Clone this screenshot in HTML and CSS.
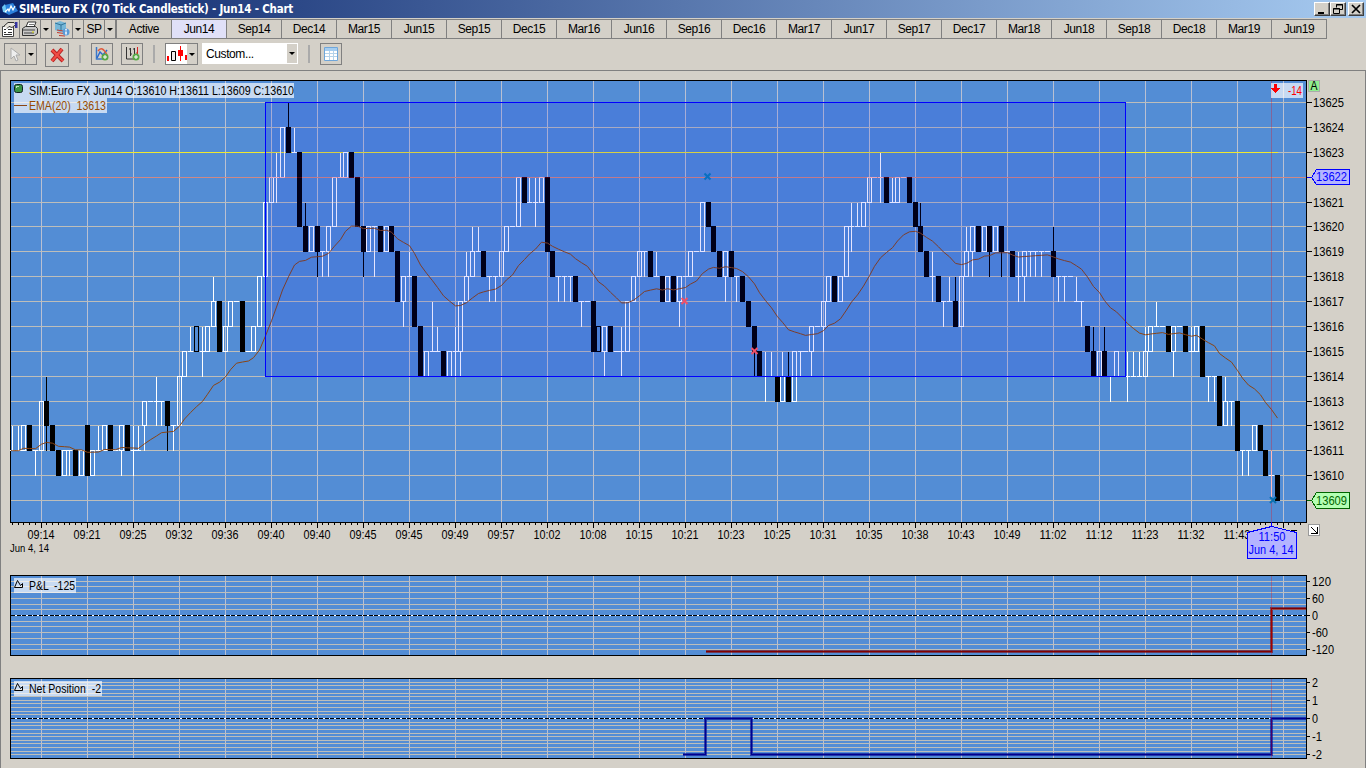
FILE: index.html
```html
<!DOCTYPE html>
<html>
<head>
    <meta charset="utf-8">
    <title>SIM:Euro FX (70 Tick Candlestick) - Jun14 - Chart</title>
    <link rel="stylesheet" href="styles.css">
</head>
<body>
    <div class="titlebar">
        <svg class="app-icon" width="16" height="16" viewBox="0 0 16 16">
            <path d="M3 4l8-2 5 8-9 4-5-3z" fill="#2b80dc"/>
            <path d="M0 6l3-3 2 9-4-1z" fill="#6dc8f5"/>
            <path d="M3 11l3-3 1 2 2-5 2 4 2-4" stroke="#fff" stroke-width="1.2" fill="none"/>
        </svg>
        <span class="title">SIM:Euro FX (70 Tick Candlestick) - Jun14 - Chart</span>
        <div class="window-buttons">
            <button><svg width="12" height="10"><path d="M2 8h6v2H2z"/></svg></button>
            <button><svg width="12" height="10" fill="none" stroke="#000"><path d="M4.500 3.500v-3h6v5h-3M4 1h7M1.500 4.500h6v5h-6zM1 5h7"/></svg></button>
            <button class="close"><svg width="12" height="10"><path d="M2 1l8 8M10 1l-8 8" stroke="#000" stroke-width="1.700"/></svg></button>
        </div>
    </div>

    <div class="contracts">
        <button class="tool w20"><svg width="18" height="18" viewBox="0 0 18 18"><path d="M1.500 6.500h11v10h-11z" fill="#fff" stroke="#444"/><path d="M3 9.500h2M3 12.500h2M7 9.500h4M7 12.500h4M3 14.500h8" stroke="#333"/><path d="M3 6l4-3.500h6l2 2-4 3-3-1-2 2" stroke="#333" fill="#e8e4dc"/><path d="M14 2h2.500v6H14z" fill="#3333a0"/></svg></button>
        <button class="tool w20"><svg width="18" height="18" viewBox="0 0 18 18"><path d="M5 7l2-5h8l-2 5" fill="#fff" stroke="#333"/><path d="M8 4.500h5" stroke="#777"/><path d="M1.500 8.500l3-2h10l2 2v5l-3 2h-12z" fill="#c8c8c8" stroke="#333"/><path d="M2 10h12M3 13h10" stroke="#444"/><path d="M11 12h2" stroke="#dd0"/></svg></button>
        <button class="tool drop w12"></button>
        <button class="tool w21"><svg width="18" height="18" viewBox="0 0 18 18"><path d="M2 3l5-2 6 2v8l-6 1-5-2z" fill="#76b7d8"/><path d="M2 3l6 2 5-2M8 5v6" stroke="#31749a" fill="none"/><path d="M4 10l6 1M4 12.500l7 1M6 15.500l6 .5" stroke="#c33b2f"/><circle cx="13" cy="12" r="3.500" fill="#5a99d8"/><path d="M13 11.500v3M13 9v1.500" stroke="#fff" stroke-width="1.500"/></svg></button>
        <button class="tool drop w12"></button>
        <button class="tool w20 sp">SP</button>
        <button class="tool drop w11"></button>
        <div class="tabs" id="tabs"></div>
    </div>

    <div class="toolbar">
        <button class="tb"><svg width="20" height="20"><path d="M6 4v11l3-3 2 5 2-1-2-5h4z" fill="#eee" stroke="#aaa"/></svg></button>
        <button class="tb drop narrow"></button>
        <button class="tb delete"><svg width="20" height="20"><path d="M5 5l11 11M15 4L5 16" stroke="#b52020" stroke-width="4"/><path d="M5 5l11 11M15 4L5 16" stroke="#f04c45" stroke-width="2.200"/></svg></button>
        <i class="sep"></i>
        <button class="tb"><svg width="20" height="20"><path d="M4.500 3v12H14" stroke="#3c78c8" fill="none" stroke-width="1.500"/><path d="M5 14l3-6 3 3 4-5" stroke="#2a69cf" fill="none" stroke-width="1.500"/><path d="M6 7q4-6 9 4" stroke="#e0593b" fill="none" stroke-width="1.500"/><circle cx="13" cy="13" r="3.500" fill="#57a846"/><path d="M11 13h4M13 11v4" stroke="#fff"/></svg></button>
        <button class="tb gap8"><svg width="20" height="20"><path d="M4.500 3v12H13M8.500 4v8M7 5h2M8 10h2" stroke="#333" fill="none"/><path d="M12.500 4v7M11 5h2" stroke="#333"/><path d="M15.500 3v7M14 9h2" stroke="#d22"/><circle cx="14" cy="13" r="3.500" fill="#57a846"/><path d="M12 13h4M14 11v4" stroke="#fff"/></svg></button>
        <i class="sep"></i>
        <button class="tb"><svg width="21" height="20"><path d="M0 0h21v20H0z" fill="#fff"/><path d="M1 12h2v5H1zM19 11h2v5h-2z" fill="#f00"/><path d="M5.500 7.500h4v9h-4z" fill="#eee" stroke="#000"/><path d="M12 6h5v6h-5zM14 2h1v15h-1z" fill="#f00"/></svg></button>
        <button class="tb drop narrow"></button>
        <div class="combo"><span>Custom...</span><button class="drop"></button></div>
        <i class="sep"></i>
        <button class="tb"><svg width="20" height="20"><path d="M3.500 3.500h13v13h-13z" fill="#fff" stroke="#6fa6da"/><path d="M4 4h12v3H4z" fill="#a5cdf0"/><path d="M4 9.500h12M4 12.500h12M8.500 7v9M12.500 7v9" stroke="#b4d2ea"/></svg></button>
    </div>

    <div class="workspace">
        <svg id="price" width="1364" height="494" viewBox="1 71 1364 494"></svg>
        <svg id="pnl" width="1364" height="103" viewBox="1 565 1364 103"></svg>
        <svg id="net" width="1364" height="99" viewBox="1 668 1364 99"></svg>
    </div>

    <script src="chart.js"></script>
</body>
</html>
```

FILE: styles.css
```css
body {
    margin: 0;
    width: 1366px;
    height: 768px;
    overflow: hidden;
    display: flex;
    flex-direction: column;
    background: #d4d0c8;
    font-family: "Liberation Sans", Arial, sans-serif;
    font-size: 12px;
    letter-spacing: -0.4px;
}

button {
    box-sizing: border-box;
    padding: 0;
    margin: 0;
    background: #d4d0c8;
    font: inherit;
    letter-spacing: inherit;
    color: #000;
    border-radius: 0;
}

svg {
    display: block;
    letter-spacing: 0;
}

/* Title bar */
.titlebar {
    display: flex;
    align-items: center;
    height: 18px;
    flex: none;
    background: linear-gradient(to right, #0a246a, #a6caf0);
}

.app-icon {
    margin: 0 1px 0 2px;
}

.title {
    color: #fff;
    font: bold 11.5px "DejaVu Sans Condensed", "DejaVu Sans", sans-serif;
    font-stretch: condensed;
    letter-spacing: -0.22px;
    white-space: nowrap;
}

.window-buttons {
    display: flex;
    margin-left: auto;
    padding-right: 2px;
}

.window-buttons button {
    width: 16px;
    height: 14px;
    border: 1px solid;
    border-color: #fff #404040 #404040 #fff;
    box-shadow: inset -1px -1px #808080;
    padding-left: 1px;
}

.window-buttons .close {
    margin-left: 2px;
}

/* Contract months */
.contracts {
    display: flex;
    flex: none;
    height: 20px;
    margin-top: 1px;
}

.tool {
    height: 20px;
    border: 1px solid #808080;
    border-left-width: 0;
    display: flex;
    align-items: center;
    justify-content: center;
}

.w11 { width: 11px; }
.w12 { width: 11.5px; }
.w20 { width: 20.5px; }
.w21 { width: 20.5px; }

.sp {
    width: 21px;
}

.drop::after {
    content: "";
    display: block;
    margin: auto;
    width: 0;
    border: 3px solid transparent;
    border-top-color: #000;
    border-bottom-width: 0;
}

.tabs {
    display: flex;
    border-left: 1px solid #808080;
    margin-left: auto;
    margin-right: 39px;
}

.tabs button {
    width: 55px;
    height: 20px;
    border: 1px solid #808080;
    border-left: 0;
}

.tabs .active {
    background: #e0e0f8;
}

/* Drawing tools */
.toolbar {
    display: flex;
    align-items: flex-start;
    box-sizing: border-box;
    flex: none;
    height: 31px;
    padding: 4px 0 0 4px;
}

.tb {
    width: 22px;
    height: 22px;
    border: 1px solid #808080;
    display: flex;
    align-items: center;
    justify-content: center;
}

.tb svg {
    flex: none;
}

.narrow {
    width: 11px;
    border-left: 0;
}

.delete {
    width: 24px;
    height: 24px;
    margin-left: 8px;
}

.gap8 {
    margin-left: 8px;
}

.sep {
    width: 2px;
    height: 18px;
    margin: 2px 10px 0;
    background: #aaa;
}

.combo {
    display: flex;
    align-items: center;
    justify-content: space-between;
    box-sizing: border-box;
    width: 96px;
    height: 21px;
    margin-left: 4px;
    padding: 1px 1px 1px 4px;
    background: #fff;
}

.combo button {
    width: 10px;
    height: 19px;
    border: 0;
}

/* Charts */
.workspace {
    flex: 1;
    border: 1px solid #808080;
    border-bottom: 0;
}

.workspace svg {
    shape-rendering: crispEdges;
}

.plot { fill: #538dd5; stroke: #000; }
.grid-x { stroke: #b9c0d2; }
.grid-y { stroke: #bdbeba; }
.axis { stroke: #000; }
.zero { stroke: #fff; }
.zero-dash { stroke: #000; stroke-dasharray: 4 1.5; }
.up { fill: none; stroke: #fff; }
.down { fill: #000; stroke: #000; }
.down-open { fill: none; stroke: #000; }
.ema { fill: none; stroke: #8b4513; }
.average { shape-rendering: auto; }
.zone { fill: rgba(0, 0, 255, 0.1); stroke: #00f; }
.level { stroke: #f0e82e; }
.cross { stroke: #f00; stroke-opacity: 0.28; }
.label-box { fill: #fff; fill-opacity: 0.68; }
.pnl-line { fill: none; stroke: #800000; stroke-width: 1; }
.net-line { fill: none; stroke: #000090; stroke-width: 1; }
.glow { stroke-width: 3; stroke-opacity: 0.6; }
.blue-tag { fill: #b4b4ff; stroke: #00f; }
.green-tag { fill: #b4ffb4; stroke: #006400; }
.blue-text { fill: #00f; }
.green-text { fill: #006400; }
.ema-text { fill: #964b00; }
.red-text { fill: #f00; }
```

FILE: chart.js
```javascript
// contract tabs
const months = "Active Jun14 Sep14 Dec14 Mar15 Jun15 Sep15 Dec15 Mar16 Jun16 Sep16 Dec16 Mar17 Jun17 Sep17 Dec17 Mar18 Jun18 Sep18 Dec18 Mar19 Jun19".split(" ");
document.getElementById("tabs").innerHTML = months.map(m =>
    `<button${m === "Jun14" ? ' class="active"' : ""}>${m}</button>`).join("");

// one entry per bar: w = up, b = down, o = open down body, d = doji
// body top/bottom, then optional h(igh) and l(ow), all over 13600
const bars = `
d11h12 d11h12 w1211 b1211 d11l10 w1311 b1312h14l11 b1211 b1110 w1110 d11l10 b1110 w1110 b1210 w1110 d11h12
w1211 b1211 d11 w1211l10 b1211 d11h12l10 d11h12 w1312l11 d13 d13h14l12 d13l12 b1312l11 d12l11 w1412 w1514 d15h16
o1615 d15h16l14 w1615 w1716h18 b1715 w1615 w1716 d17 b1715 d15 w1615 w1816 w2118 w2221 d22h23l21 w2422
b2423h25 d23h24 b2320 b2019h21 w2019 b2019l18 d19l18 w2019l18 w2220 d22h23 w2322 b2322 b2220 b2019l18 w2019 d20l18
b2019 w2019 b2019 b1917 w1817l16 d18h19 b1816 b1614 w1514 d15h17 d15h16 b1514 w1514 d15h16l14 w1715l14 w1817h19
w1918h20 d19h20 b1918 d18l17 d18l17 w1918 w2019 d20 w2220 b2221 d21h22 d21h22l20 w2221 b2219 b1918 d18l17
d18l17 d18l17 b1817 d17l16 d17 b1715 o1615 w1615l14 b1615 d15 d15h16l14 w1715 w1817 w1918 d19l18 b1918
d18h19 b1817 w1817 b1817 w1817l16 d18 w1918 d19 w2119 b2120 b2019 b1918 w1918l17 b1918 d18l17 b1817
b1716 b1615l14 b1514 d14h15l13 d14h15 b1413 w1413h15 b1413h15 w1513 d15l14 d15 w1615l14 d16 w1716l15 w1817 b1817
w1817 w2018 d20h21l19 d20h21 w2120 w2221 d22 d22h23l21 b2221 d21h22 w2221 d22 b2221 b2120 b2019h21 b1918
d18h19l17 b1817 d17l16 d17h18 b1716h18 w1816 w1918h20 w2019l18 b2019 w2019 b2019l18 w2019 b2019l18 d19 b1918 d18h19l17
w1918l17 d19l18 d19l18 d19l18 d19 b1918h20 d18l17 d18l17 d18 d17h18 d17l16 b1615 b1514h16 w1514 b1514h16 d14l13
w1514 d14 d14h15l13 d14h15 d14h15 w1514h16 w1615 d16h17 d16 b1615 w1615l14 d16 b1615 d15h16 w1615 b1614
d14l13 d14l13 b1412 w1312h14 d13l12 b1311 d11l10 d11l10 w1211 b1211 b1110 d10h11l9 b109`.trim().split(/\s+/);

const times = "09:14 09:21 09:25 09:32 09:36 09:40 09:40 09:45 09:45 09:49 09:57 10:02 10:08 10:15 10:21 10:23 10:25 10:31 10:35 10:38 10:43 10:49 11:02 11:12 11:23 11:32 11:43".split(" ");
const gridX = times.map((t, i) => 41 + i * 46).concat(1283);

const barX = i => Math.floor(12.25 + 5.75 * i) + 0.5;
const levelY = p => Math.floor(102.6 + 24.87 * (25 - p)) + 0.5;

function line(cls, x1, y1, x2, y2) {
    return `<path class="${cls}" d="M${x1} ${y1}L${x2} ${y2}"/>`;
}

function text(x, y, str, len, cls = "", anchor = "start") {
    return `<text class="${cls}" x="${x}" y="${y}" text-anchor="${anchor}" textLength="${len}" lengthAdjust="spacingAndGlyphs" xml:space="preserve">${str}</text>`;
}

function plot(top, bottom, rows) {
    let s = `<rect class="plot" x="10.5" y="${top}.5" width="1296" height="${bottom - top}"/>`;
    gridX.forEach(x => s += line("grid-x", x + 0.5, top + 1, x + 0.5, bottom));
    rows.forEach(y => s += line("grid-y", 11, y, 1306, y));
    return s;
}

function candle(code, i) {
    const m = code.match(/^([wbod])(\d\d)(\d{0,2})(?:h(\d+))?(?:l(\d+))?$/);
    const x = barX(i);
    const top = levelY(+m[2]);
    const bottom = m[3] ? levelY(+m[3]) : top;
    const cls = { w: "up", b: "down", o: "down-open", d: "up" }[m[1]];
    let s = "";
    if (m[1] === "d") s += line(cls, x - 2.5, top, x + 2.5, top);
    else s += `<rect class="${cls}" x="${x - 2}" y="${top}" width="4" height="${bottom - top}"/>`;
    if (m[4]) s += line(cls, x, levelY(+m[4]), x, top);
    if (m[5]) s += line(cls, x, bottom, x, levelY(+m[5]) + 0.5);
    return s;
}

function marker(x, y, color) {
    return `<path d="M${x - 3} ${y - 3}l6 6m0-6l-6 6" stroke="${color}" stroke-width="2" shape-rendering="auto"/>`;
}

function drawPrice() {
    const prices = Array.from({ length: 17 }, (_, i) => 25 - i);
    let s = plot(80, 522, prices.map(levelY));
    s += line("level", 11, 152.5, 1278, 152.5);
    bars.forEach((b, i) => s += candle(b, i));

    // 20 bar exponential average of the closes
    let ema = 11;
    const points = bars.map((b, i) => {
        const m = b.match(/^(.)(\d\d)(\d*)/);
        const close = m[1] === "b" || m[1] === "o" ? +m[3] : +m[2];
        ema += (close - ema) * 2 / 21;
        return barX(i) + "," + (102.5 + 24.87 * (25 - ema)).toFixed(1);
    });
    s += `<polyline class="ema average" points="11,450.5 ${points.join(" ")}"/>`;

    s += `<rect class="zone" x="265.5" y="102.500" width="860" height="274"/>`;
    s += line("cross", 11, 177.5, 1306, 177.5) + line("cross", 1271.5, 81, 1271.5, 522);
    s += marker(707.5, 176.500, "#0870c0") + marker(684.5, 301, "#f05068") + marker(754.5, 351, "#f05068") + marker(1273, 500, "#0870b0");

    // legend
    s += `<rect class="label-box" x="14" y="83" width="280" height="15"/><rect class="label-box" x="14" y="98" width="93" height="15"/>`;
    s += `<rect x="14.5" y="84.500" width="8" height="8" rx="2" fill="#3a9445" stroke="#122" shape-rendering="auto"/><path d="M16 88v-2h3" stroke="#bfe5c0" fill="none"/>`;
    s += text(29, 95, "SIM:Euro FX Jun14 O:13610 H:13611 L:13609 C:13610", 265);
    s += line("ema", 14, 105.5, 27, 105.5) + text(29, 110, "EMA(20)  13613", 77, "ema-text");
    s += `<rect class="label-box" x="1271" y="83" width="32" height="15"/><path d="M1274 84h3v4h3l-4.500 5-4.500-5h3z" fill="#f00"/>`;
    s += text(1288, 95, "-14", 14, "red-text");
    s += `<rect x="1308.5" y="80.500" width="11" height="11" fill="#90ee90" stroke="#aaa"/>` + text(1310.5, 90, "A", 7);

    prices.forEach(p => {
        if (p === 22 || p === 9) return;
        s += line("axis", 1307, levelY(p), 1312, levelY(p)) + text(1313, levelY(p) + 4.5, 13600 + p, 31);
    });
    s += `<path class="blue-tag" d="M1307 177.500H1311.500L1316.500 169.500H1349.500V184.500H1316.500L1311.500 177.500"/>` + text(1316, 181, "13622", 31, "blue-text");
    s += `<path class="green-tag" d="M1307 500.500H1311.500L1316.500 492.500H1349.500V508.500H1316.500L1311.500 500.500"/>` + text(1316, 505, "13609", 31, "green-text");

    // time axis
    for (let i = 0; i < 226; i++) {
        const x = barX(i);
        if (x < 1306) s += line("axis", x, 523, x, (i - 5) % 8 === 0 ? 528 : 525);
    }
    times.forEach((t, i) => s += text(41 + i * 46, 539, t, 27, "", "middle"));
    s += line("axis", 1291, 530.5, 1297, 530.5);
    s += text(10, 552, "Jun 4, 14", 39).replace("<text", '<text font-size="11"');
    s += `<path class="blue-tag" d="M1271.500 522V526.500L1296.500 532.500V558.500H1247.500V532.500L1271.500 526.500"/>`;
    s += text(1272, 541, "11:50", 27, "blue-text", "middle") + text(1271, 554, "Jun 4, 14", 45, "blue-text", "middle");
    s += `<rect x="1308.5" y="524.500" width="11" height="11" fill="#fff" stroke="#999"/><path d="M1311 527l6 6M1317.500 527v6.500H1311" stroke="#000" fill="none"/>`;
    document.getElementById("price").innerHTML = s;
}

function drawStudy(id, top, bottom, rows, zero, path, cls, name, width, labels) {
    let s = plot(top, bottom, rows.map(y => y + 0.5));
    s += line("zero", 11, zero + 0.5, 1306, zero + 0.5) + line("zero-dash", 11, zero + 0.5, 1306, zero + 0.5);
    s += `<path class="${cls} glow" d="${path}"/><path class="${cls}" d="${path}"/>`;
    s += line("cross", 1271.5, top + 1, 1271.5, bottom);
    s += `<rect class="label-box" x="14" y="${top + 3}" width="${width + 16}" height="15"/>`;
    s += `<path d="M14.5 ${top + 12}.5h8v-4l-2 2-3-5-3 7" fill="none" stroke="#000" shape-rendering="auto"/>`;
    s += text(29, top + 15, name, width);
    labels.forEach(([label, y, len]) => {
        s += line("axis", 1307, y + 0.5, 1310, y + 0.5) + text(1312, y + 5, label, len);
    });
    document.getElementById(id).innerHTML = s;
}

drawPrice();
drawStudy("pnl", 575, 655, [581, 586, 592, 598, 604, 609, 621, 626, 632, 638, 644, 649], 615,
    "M706 651.5H1271.5V608.5H1306", "pnl-line", "P&amp;L  -125", 46,
    [["120", 581, 19], ["60", 598, 12], ["0", 615, 6], ["-60", 632, 16], ["-120", 649, 22]]);
drawStudy("net", 678, 758, [682, 685, 689, 693, 696, 700, 703, 707, 711, 714, 722, 725, 729, 733, 736, 740, 743, 747, 751, 754], 718,
    "M683 754.5H705.5V718.5H751.5V754.5H1271.5V718.5H1306", "net-line", "Net Position  -2", 72,
    [["2", 682, 6], ["1", 700, 6], ["0", 718, 6], ["-1", 736, 10], ["-2", 754, 10]]);
```
